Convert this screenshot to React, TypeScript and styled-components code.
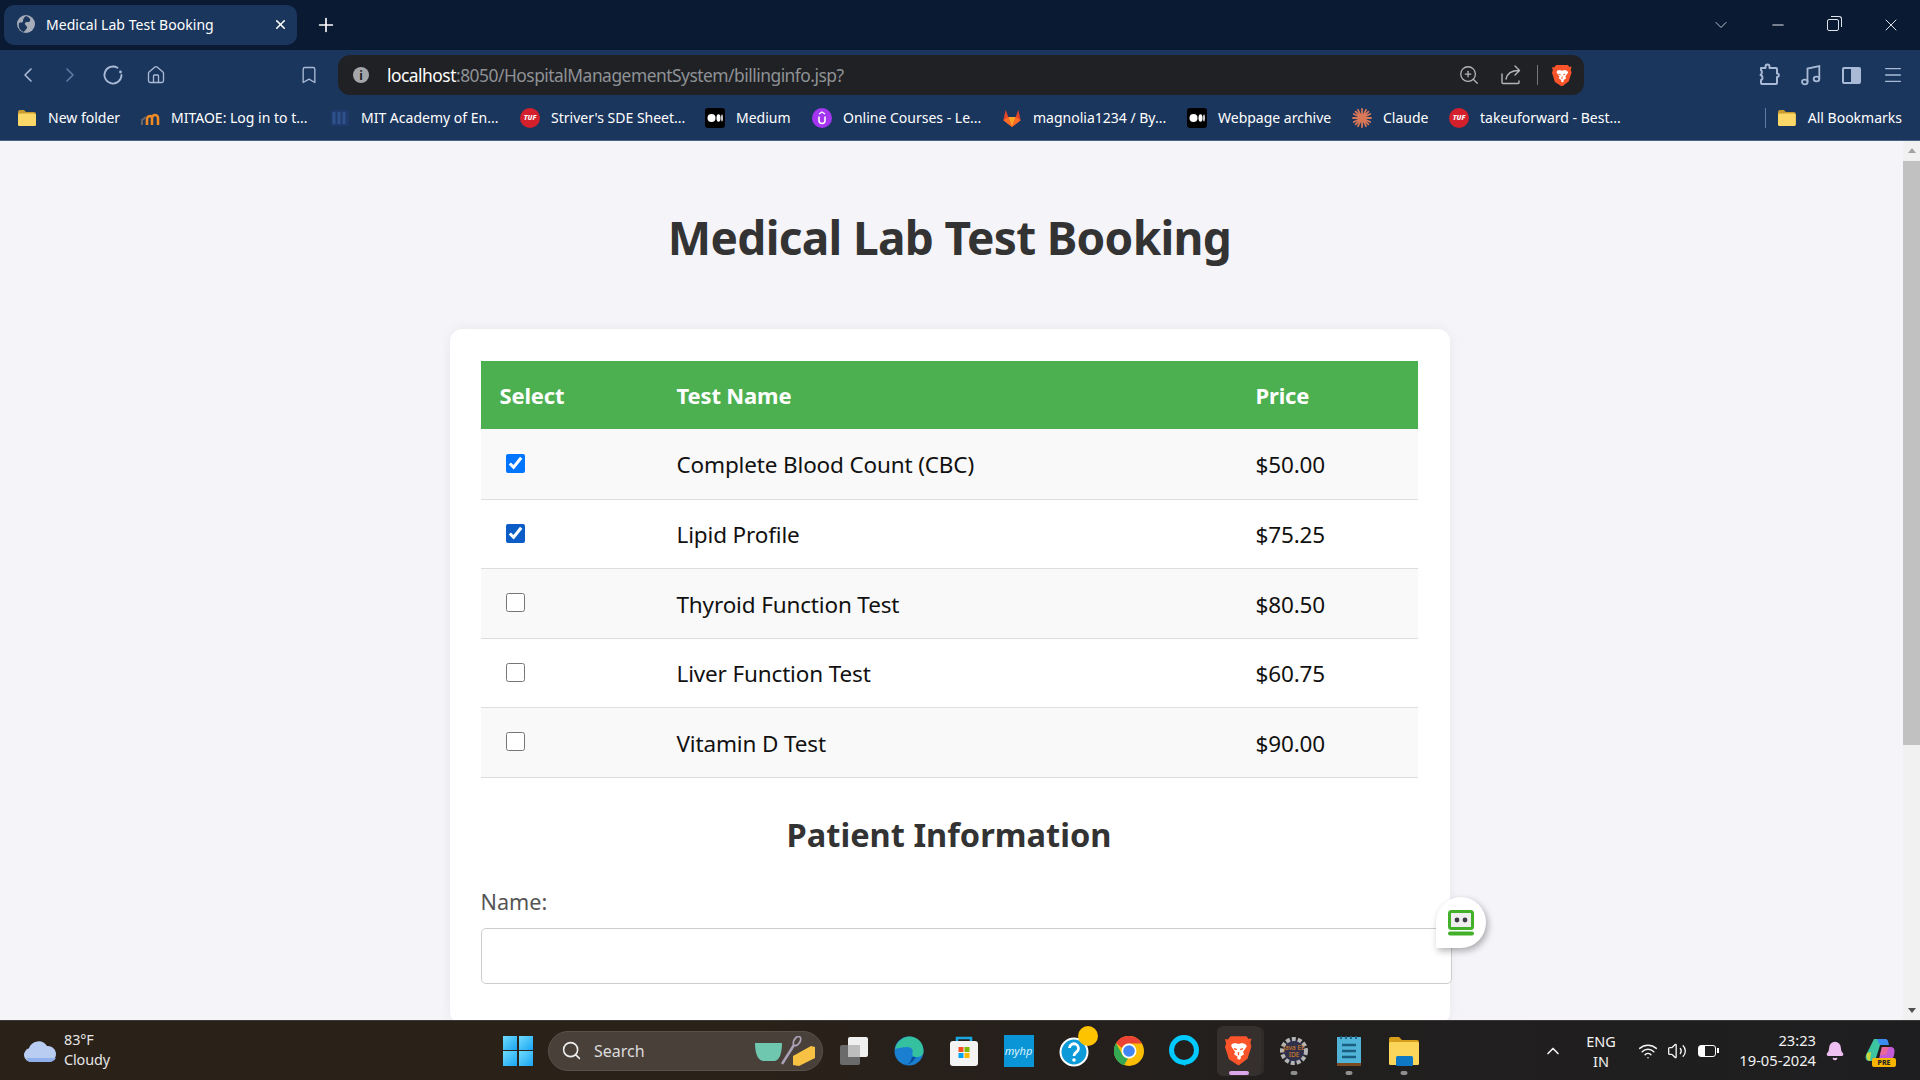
import React from 'react';
import styled, { createGlobalStyle } from 'styled-components';
import {
  Bell, ChevronDown, ChevronLeft, ChevronRight, ChevronUp, Home, Menu, Minus,
  Plus, Search, Volume2, Wifi, X, ZoomIn, Bookmark,
} from 'lucide-react';

const GlobalStyle = createGlobalStyle`
  * { box-sizing: border-box; }
  html, body { margin: 0; height: 100%; overflow: hidden; }
  body { font-family: "Noto Sans", "Open Sans", Arial, sans-serif; background: #f4f4f9; }
`;

const Screen = styled.div`
  width: 1920px;
  height: 1080px;
  display: flex;
  flex-direction: column;
  overflow: hidden;
`;

/* browser chrome */
const TabStrip = styled.div`
  height: 50px;
  flex: none;
  background: #0a1a33;
  display: flex;
  align-items: center;
  padding: 0 0 0 4px;
  color: #fff;
`;
const Tab = styled.div`
  width: 293px;
  height: 40px;
  background: #1b365d;
  border-radius: 10px;
  display: flex;
  align-items: center;
  padding: 0 9px 2px 13px;
  gap: 11px;
  font-size: 14px;
`;
const TabTitle = styled.span`
  flex: 1;
  letter-spacing: 0.05px;
`;
const NewTab = styled.div`
  margin-left: 18px;
  display: flex;
`;
const WindowControls = styled.div`
  margin-left: auto;
  display: flex;
  align-items: center;
  gap: 38px;
  padding-right: 19px;
  color: #dfe3ea;
`;
const RestoreIcon = styled.span`
  width: 12px;
  height: 12px;
  border: 1.4px solid #dfe3ea;
  border-radius: 2px;
  position: relative;
  margin: 0 4px 0 2px;
  &::after {
    content: "";
    position: absolute;
    top: -4px;
    right: -4px;
    width: 10px;
    height: 10px;
    border-top: 1.4px solid #dfe3ea;
    border-right: 1.4px solid #dfe3ea;
    border-top-right-radius: 3px;
  }
`;
const Toolbar = styled.div`
  height: 50px;
  flex: none;
  background: #1b365d;
  display: flex;
  align-items: center;
  padding: 0 0 0 16px;
  color: #a9bad6;
`;
const ToolButton = styled.span<{ $dim?: boolean; $gap?: number }>`
  width: 24px;
  height: 24px;
  display: flex;
  align-items: center;
  justify-content: center;
  margin-right: ${(p) => p.$gap ?? 19}px;
  color: ${(p) => (p.$dim ? '#5f7aa3' : '#a9bad6')};
`;
const AddressBar = styled.div`
  width: 1246px;
  height: 40px;
  background: #202124;
  border-radius: 12px;
  display: flex;
  align-items: center;
  padding: 0 12px 0 15px;
  font-size: 17.4px;
  color: #8f9296;
`;
const InfoDot = styled.span`
  width: 16px;
  height: 16px;
  border-radius: 50%;
  background: #a4a6a9;
  color: #202124;
  font-size: 12px;
  font-weight: 700;
  display: flex;
  align-items: center;
  justify-content: center;
  margin-right: 18px;
`;
const Host = styled.span`
  color: #fff;
`;
const Url = styled.span`
  flex: 1;
  letter-spacing: -0.5px;
`;
const BarIcon = styled.span<{ $gap: number }>`
  display: flex;
  color: #b5b6b8;
  margin-right: ${(p) => p.$gap}px;
`;
const BarDivider = styled.span`
  width: 1px;
  height: 20px;
  background: #77787b;
  margin: 0 14px 0 -4px;
`;
const RightTools = styled.div`
  display: flex;
  align-items: center;
  gap: 18px;
  margin-left: auto;
  padding-right: 16px;
`;
const PanelIcon = styled.span`
  width: 19px;
  height: 17px;
  margin: 0 3px;
  border: 2px solid #a9bad6;
  border-radius: 2px;
  background: linear-gradient(90deg, transparent 50%, #a9bad6 50%);
`;
const PuzzleSlot = styled.span`
  display: flex;
  margin-right: 3px;
`;

const BookmarksBar = styled.div`
  height: 41px;
  flex: none;
  background: #1b365d;
  border-bottom: 1px solid #4a6286;
  display: flex;
  align-items: center;
  padding: 0 0 5px 17px;
  color: #fff;
  font-size: 14px;
`;
const BookmarkItem = styled.div<{ $w: number }>`
  width: ${(p) => p.$w}px;
  flex: none;
  display: flex;
  align-items: center;
  gap: 11px;
  white-space: nowrap;
`;
const BookmarkSeparator = styled.span`
  width: 1px;
  height: 20px;
  background: #5f7aa3;
  margin-left: 106px;
  margin-right: 11px;
`;
const Favicon = styled.span<{ $bg: string; $round?: boolean }>`
  width: 20px;
  height: 20px;
  flex: none;
  display: flex;
  align-items: center;
  justify-content: center;
  background: ${(p) => p.$bg};
  border-radius: ${(p) => (p.$round ? '50%' : '3px')};
`;
const TufText = styled.span`
  color: #fff;
  font-size: 7px;
  font-weight: 800;
  font-style: italic;
`;

/* page */
const Viewport = styled.div`
  flex: 1;
  min-height: 0;
  display: flex;
  position: relative;
  overflow: hidden;
`;
const Page = styled.main`
  width: 1903px;
  flex: none;
  background: #f4f4f9;
  padding-right: 4px;
  display: flex;
  flex-direction: column;
  align-items: center;
`;
const Title = styled.h1`
  flex: none;
  margin: 61px 0 45px;
  height: 82px;
  line-height: 70px;
  font-size: 46px;
  font-weight: 700;
  color: #333;
  letter-spacing: -0.7px;
`;
const Card = styled.section`
  width: 1000px;
  flex: none;
  background: #fff;
  border-radius: 12px;
  box-shadow: 0 0 12px rgba(0, 0, 0, 0.06);
  padding: 32px 32px 40px 31px;
`;
const TestsTable = styled.table`
  width: 937px;
  border-collapse: collapse;
  table-layout: fixed;
  font-size: 22.5px;
  letter-spacing: -0.15px;
  color: #111;
`;
const HeadCell = styled.th<{ $w: number }>`
  width: ${(p) => p.$w}px;
  height: 68px;
  background: #4caf50;
  color: #fff;
  text-align: left;
  padding: 0 19px;
  font-size: 22px;
  font-weight: 700;
`;
const Row = styled.tr<{ $odd: boolean }>`
  height: ${(p) => (p.$odd ? 70 : 69)}px;
  background: ${(p) => (p.$odd ? '#f9f9f9' : '#fff')};
  border-bottom: 1px solid #ddd;
`;
const Cell = styled.td`
  padding: 2px 19px 0;
`;
const CheckCell = styled(Cell)`
  padding: 0 18px 1px 25px;
`;
const Check = styled.input<{ $hover?: boolean }>`
  width: 19px;
  height: 19px;
  margin: 0;
  display: block;
  accent-color: ${(p) => (p.$hover ? '#0b5cc6' : '#0075ff')};
`;
const SectionTitle = styled.h2`
  margin: 33px 0 28px;
  text-align: center;
  font-size: 32.6px;
  line-height: 48px;
  font-weight: 700;
  color: #333;
`;
const FieldLabel = styled.label`
  display: block;
  font-size: 21.6px;
  line-height: 30px;
  color: #555;
  margin-bottom: 11px;
`;
const TextInput = styled.input`
  display: block;
  width: 971px;
  height: 56px;
  border: 1px solid #ccc;
  border-radius: 5px;
  background: #fff;
`;
const Scrollbar = styled.div`
  width: 17px;
  flex: none;
  background: #f1f1f1;
  display: flex;
  flex-direction: column;
  align-items: center;
`;
const ArrowUp = styled.span`
  margin-top: 7px;
  border: 4.5px solid transparent;
  border-top: 0;
  border-bottom: 5px solid #a3a3a3;
`;
const Thumb = styled.div`
  width: 17px;
  height: 584px;
  margin-top: 8px;
  background: #c1c1c1;
`;
const ArrowDown = styled.span`
  margin-top: auto;
  margin-bottom: 7px;
  border: 4.5px solid transparent;
  border-bottom: 0;
  border-top: 5px solid #505050;
`;
const RoboBubble = styled.div`
  position: absolute;
  left: 1436px;
  top: 756px;
  width: 50px;
  height: 51px;
  background: #fff;
  border-radius: 50% 50% 50% 0;
  box-shadow: 2px 3px 7px rgba(0, 0, 0, 0.3);
  display: flex;
  align-items: center;
  justify-content: center;
`;

/* taskbar */
const Taskbar = styled.footer`
  height: 60px;
  flex: none;
  background: linear-gradient(90deg, #2a2119 0%, #2a2119 40%, #221f1e 65%, #1e1e20 100%);
  border-top: 1px solid #3b3836;
  display: flex;
  align-items: center;
  color: #fff;
  position: relative;
`;
const Weather = styled.div`
  width: 503px;
  flex: none;
  display: flex;
  align-items: center;
  gap: 7px;
  padding-left: 23px;
`;
const WeatherText = styled.div`
  font-size: 14.4px;
  line-height: 20px;
  margin-top: -2px;
  letter-spacing: -0.1px;
  color: #e6e6e6;
`;
const WinLogo = styled.span`
  width: 30px;
  height: 30px;
  flex: none;
  display: grid;
  grid-template-columns: 1fr 1fr;
  gap: 1.5px;
  margin-right: 15px;
  & > i {
    display: block;
    background: linear-gradient(135deg, #6fdcfb, #1aa4f5);
  }
`;
const SearchPill = styled.div`
  width: 275px;
  height: 40px;
  flex: none;
  background: #4a403a;
  border: 1px solid #5a514b;
  border-radius: 20px;
  display: flex;
  align-items: center;
  padding: 0 7px 0 12px;
  gap: 12px;
  font-size: 16px;
  color: #dcdcdc;
`;
const PillLabel = styled.span`
  flex: 1;
`;
const AppRow = styled.div`
  display: flex;
  align-items: center;
  margin-left: 3px;
`;
const AppSlot = styled.div<{ $active?: boolean }>`
  width: 55px;
  height: 50px;
  display: flex;
  align-items: center;
  justify-content: center;
  position: relative;
  ${(p) => p.$active && `
    &::before {
      content: "";
      position: absolute;
      inset: 0 5px 0 6px;
      background: #35302d;
      border-radius: 6px;
      box-shadow: 4px 0 0 -1px #2f2b29;
    }
  `}
  & > svg, & > span {
    position: relative;
  }
`;
const RunDot = styled.i<{ $active?: boolean }>`
  position: absolute;
  bottom: 1px;
  left: 50%;
  transform: translateX(-50%);
  width: ${(p) => (p.$active ? 20 : 7)}px;
  height: 4px;
  border-radius: 2px;
  background: ${(p) => (p.$active ? '#dba6ea' : '#8f8f8f')};
`;
const HelpBadge = styled.i`
  position: absolute;
  top: 0;
  right: 3px;
  width: 20px;
  height: 20px;
  border-radius: 50%;
  background: #fdc200;
`;
const Tray = styled.div`
  position: absolute;
  left: 1543px;
  top: 0;
  bottom: 0;
  width: 377px;
  display: flex;
  align-items: center;
  font-size: 15px;
  color: #f2f2f2;
`;
const Lang = styled.div`
  width: 44px;
  margin-left: 16px;
  text-align: center;
  line-height: 20px;
  font-size: 14.5px;
`;
const TrayIcons = styled.div`
  display: flex;
  align-items: center;
  gap: 9px;
  margin-left: 15px;
`;
const BatteryIcon = styled.span`
  width: 18px;
  height: 12px;
  margin-left: 2px;
  border: 1.5px solid #fff;
  border-radius: 3px;
  position: relative;
  background: linear-gradient(90deg, #fff 40%, transparent 40%);
  &::after {
    content: "";
    position: absolute;
    right: -4px;
    top: 2px;
    width: 2px;
    height: 5px;
    background: #fff;
  }
`;
const Clock = styled.div`
  margin-left: 8px;
  margin-top: -2px;
  width: 92px;
  flex: none;
  text-align: right;
  line-height: 20px;
  font-size: 14.7px;
`;
const BellIcon = styled(Bell)`
  margin-left: 9px;
  flex: none;
`;
const CopilotWrap = styled.div`
  margin-left: 20px;
  position: relative;
  display: flex;
`;
const PreTag = styled.span`
  position: absolute;
  right: -1px;
  bottom: -3px;
  width: 24px;
  height: 9px;
  border-radius: 2px;
  background: #f7b500;
  color: #222;
  font-size: 7px;
  font-weight: 800;
  line-height: 9px;
  text-align: center;
`;

const FolderIcon = () => (
  <svg width="20" height="18" viewBox="0 0 20 18">
    <path d="M1 3a2 2 0 0 1 2-2h4l2 2h8a2 2 0 0 1 2 2v10a2 2 0 0 1-2 2H3a2 2 0 0 1-2-2z" fill="#c99a2e" />
    <rect x="1" y="4.500" width="18" height="12.500" rx="1.500" fill="#fbd768" />
  </svg>
);
const MoodleIcon = () => (
  <svg width="20" height="18" viewBox="0 0 20 18">
    <path d="M7 16V10a3 3 0 0 1 5.500-1.500M12 16V9a3 3 0 0 1 6 0v7" fill="none" stroke="#f08a24" strokeWidth="2.600" />
    <path d="M2 16v-5l4-3" fill="none" stroke="#666" strokeWidth="2" />
  </svg>
);
const CollegeIcon = () => (
  <svg width="20" height="20" viewBox="0 0 20 20">
    <rect x="1" y="2" width="18" height="16" fill="#1f3a6b" />
    <path d="M4 4v12M9 4v12M14 4v12" stroke="#2f528c" strokeWidth="3" />
  </svg>
);
const MediumIcon = () => (
  <svg width="20" height="20" viewBox="0 0 20 20">
    <rect width="20" height="20" rx="3" fill="#000" />
    <circle cx="6.500" cy="10" r="4" fill="#fff" />
    <ellipse cx="13.500" cy="10" rx="2" ry="3.800" fill="#fff" />
    <ellipse cx="17" cy="10" rx="0.800" ry="3.400" fill="#fff" />
  </svg>
);
const UdemyIcon = () => (
  <svg width="20" height="20" viewBox="0 0 20 20">
    <circle cx="10" cy="10" r="10" fill="#a435f0" />
    <path d="M7 8.500v4a3 3 0 0 0 6 0v-4" fill="none" stroke="#fff" strokeWidth="1.600" />
    <path d="M7 6l3-2 3 2" fill="none" stroke="#fff" strokeWidth="1.300" />
  </svg>
);
const GitlabIcon = () => (
  <svg width="20" height="22" viewBox="0 0 22 22">
    <path d="M11 21 1.500 13.500 4 2l3 8h8l3-8 2.500 11.500z" fill="#e24329" />
    <path d="M11 21 7 10h8z" fill="#fca326" />
    <path d="M11 21 1.500 13.500 7 10zM11 21l9.500-7.500L15 10z" fill="#fc6d26" />
  </svg>
);
const ClaudeIcon = () => (
  <svg width="20" height="20" viewBox="0 0 20 20" stroke="#d97757" strokeWidth="1.800" strokeLinecap="round">
    <path d="M10 1v18M1 10h18M3.600 3.600l12.800 12.800M16.400 3.600 3.600 16.400M6 1.800l8 16.400M14 1.800 6 18.200M1.800 6l16.400 8M18.200 6 1.800 14" />
  </svg>
);
const BraveIcon = ({ size }: { size: number }) => (
  <svg width={size} height={size * 1.13} viewBox="0 0 24 27">
    <path d="M5 1h14l2 2.500 2.500-.5-1 4 1 3-3.500 11L12 27l-8.500-5.500L0 10.500l1-3-1-4 2.500.5z" fill="#fb542b" />
    <path d="M6 8l3-1 3 1 3-1 3 1 1.500 2-3.500 5 1 2-3 2v2l-1.500 1-1.500-1v-2l-3-2 1-2-3.500-5z" fill="#fff" />
    <path d="M8 12l2.500 1M16 12l-2.500 1M12 15v3" stroke="#fb542b" strokeWidth="1.200" />
  </svg>
);
const ReloadIcon = () => (
  <svg width="22" height="22" viewBox="0 0 22 22" fill="none" stroke="currentColor" strokeWidth="1.800" strokeLinecap="round">
    <path d="M15.500 3.800A8.500 8.500 0 1 0 19.500 11" />
    <circle cx="18.500" cy="8" r="1.400" fill="currentColor" stroke="none" />
  </svg>
);
const ShareIcon = () => (
  <svg width="22" height="22" viewBox="0 0 22 22" fill="none" stroke="currentColor" strokeWidth="1.400" strokeLinecap="round" strokeLinejoin="round">
    <path d="M2 10v8.500a1 1 0 0 0 1 1h15a1 1 0 0 0 1-1V17" />
    <path d="M6 15c1-5 5-8.500 13-8.500M15 2l4.500 4.500L15 11" />
  </svg>
);
const PuzzleIcon = () => (
  <svg width="22" height="24" viewBox="0 0 22 24" fill="none" stroke="#a9bad6" strokeWidth="2" strokeLinejoin="round">
    <path d="M3 5h4.500V3.500a2 2 0 0 1 4 0V5H18a1 1 0 0 1 1 1v4.500h.5a1.800 1.800 0 0 1 0 3.500H19v6a1 1 0 0 1-1 1H4a1 1 0 0 1-1-1v-3c2 0 2-4.500-.5-5 1.500-1 2-3.500.5-5z" />
  </svg>
);
const NotesIcon = () => (
  <svg width="20" height="22" viewBox="0 0 20 22" fill="none" stroke="#a9bad6" strokeWidth="1.800">
    <ellipse cx="3.800" cy="18" rx="2.800" ry="2.300" />
    <ellipse cx="15.500" cy="15" rx="2.800" ry="2.300" />
    <path d="M6.500 18V4.500L18.300 2v13" />
  </svg>
);
const RoboIcon = () => (
  <svg width="26" height="26" viewBox="0 0 26 26">
    <rect x="1.500" y="1.500" width="23" height="17" rx="2" fill="#eee" stroke="#43b02a" strokeWidth="3" />
    <circle cx="9" cy="10" r="2.400" fill="#3c3c46" />
    <circle cx="17" cy="10" r="2.400" fill="#3c3c46" />
    <rect x="0" y="21.500" width="26" height="4" rx="2" fill="#43b02a" />
  </svg>
);
const CloudIcon = () => (
  <svg width="34" height="24" viewBox="0 0 34 24">
    <path d="M8 23a7 7 0 0 1-2-13.700A10 10 0 0 1 24 7a8 8 0 0 1 2 16z" fill="#b9cdf3" />
    <path d="M8 23a7 7 0 0 1-5-4h30a8 8 0 0 1-7 4z" fill="#8fb0ea" />
  </svg>
);
const BakingIcon = () => (
  <svg width="60" height="30" viewBox="0 0 60 30">
    <path d="M0 7h27c0 11-3 18-8 18h-10C3 25 0 18 0 7z" fill="#6fc7b0" />
    <path d="M27 28 39 9" stroke="#a9a1b8" strokeWidth="2.500" />
    <ellipse cx="42" cy="5" rx="3" ry="5" transform="rotate(32 42 5)" fill="none" stroke="#a9a1b8" strokeWidth="1.800" />
    <path d="M38 20 56 10l4 1v11L44 30l-6-1z" fill="#f7c244" />
  </svg>
);
const TaskViewIcon = () => (
  <svg width="30" height="30" viewBox="0 0 30 30">
    <rect x="1" y="9" width="20" height="20" rx="2" fill="#6a6a6a" />
    <rect x="9" y="1" width="20" height="20" rx="2" fill="#f0f0f0" />
    <rect x="9" y="9" width="12" height="12" fill="#bdbdbd" />
  </svg>
);
const EdgeIcon = () => (
  <svg width="30" height="30" viewBox="0 0 30 30">
    <circle cx="15" cy="15" r="14.500" fill="#1b7fd1" />
    <path d="M1 13C3 4 11 .5 15 .5 24 .5 29.500 7 29.500 15c0 4-3 6-7 6-3 0-5-2-4-4 1-3-1-6-5-6-5 0-9 1-12.500 2z" fill="#35c1a0" />
    <path d="M22 21c-4 7-10 9-14 7 4 1 8 1 10-7z" fill="#0c4d97" />
  </svg>
);
const StoreIcon = () => (
  <svg width="30" height="32" viewBox="0 0 30 32">
    <path d="M8 7V3h14v4" fill="none" stroke="#1aa7e0" strokeWidth="2.500" />
    <rect x="1" y="6" width="28" height="25" rx="3" fill="#f4f4f4" />
    <rect x="9.500" y="12" width="5" height="5" fill="#f25022" />
    <rect x="15.500" y="12" width="5" height="5" fill="#7fba00" />
    <rect x="9.500" y="18" width="5" height="5" fill="#00a4ef" />
    <rect x="15.500" y="18" width="5" height="5" fill="#ffb900" />
  </svg>
);
const MyHpTile = styled.span`
  width: 30px;
  height: 32px;
  background: #0a96d6;
  color: #dff3fc;
  font-size: 11px;
  font-style: italic;
  display: flex;
  align-items: center;
  justify-content: center;
`;
const HelpIcon = () => (
  <svg width="30" height="32" viewBox="0 0 30 32">
    <circle cx="15" cy="17" r="13.500" fill="#0d9ad8" stroke="#fff" strokeWidth="2" />
    <path d="M10.500 13a4.500 4.500 0 1 1 7 4c-1.500 1-2.500 2-2.500 4" fill="none" stroke="#fff" strokeWidth="2.800" />
    <circle cx="15" cy="25" r="1.800" fill="#fff" />
  </svg>
);
const ChromeIcon = () => (
  <svg width="30" height="30" viewBox="0 0 30 30">
    <circle cx="15" cy="15" r="15" fill="#fbbc04" />
    <path d="M15 0a15 15 0 0 1 13 7.500H15a7.500 7.500 0 0 0-7 4.500L2 7A15 15 0 0 1 15 0z" fill="#ea4335" />
    <path d="M2 7l6 11a7.500 7.500 0 0 0 6 4.500L10 29.200A15 15 0 0 1 2 7z" fill="#34a853" />
    <circle cx="15" cy="15" r="7.500" fill="#fff" />
    <circle cx="15" cy="15" r="5.800" fill="#4285f4" />
  </svg>
);
const AlexaIcon = () => (
  <svg width="30" height="32" viewBox="0 0 30 32">
    <circle cx="15" cy="15" r="12.500" fill="none" stroke="#00caff" strokeWidth="5" />
    <path d="M9 25l7 6 1-5z" fill="#00caff" />
  </svg>
);
const GearTile = () => (
  <svg width="30" height="30" viewBox="0 0 30 30">
    <circle cx="15" cy="15" r="12" fill="#30304a" stroke="#b5b5b5" strokeWidth="4" strokeDasharray="4 2" />
    <text x="15" y="13.500" textAnchor="middle" fontSize="6.500" fill="#e08a1e" fontFamily="Noto Sans, sans-serif">Java EE</text>
    <text x="15" y="21" textAnchor="middle" fontSize="6.500" fill="#e08a1e" fontFamily="Noto Sans, sans-serif">IDE</text>
  </svg>
);
const NotepadIcon = () => (
  <svg width="28" height="32" viewBox="0 0 28 32">
    <rect x="2" y="2" width="24" height="29" fill="#4fb4d8" />
    <rect x="2" y="28" width="24" height="3" fill="#7b4a20" />
    <path d="M7 10h14M7 16h14M7 22h14" stroke="#1a5e80" strokeWidth="2.400" />
    <path d="M6 1v3M11 1v3M16 1v3M21 1v3" stroke="#1a5e80" strokeWidth="1.800" />
  </svg>
);
const ExplorerIcon = () => (
  <svg width="32" height="30" viewBox="0 0 32 30">
    <path d="M1 3a2 2 0 0 1 2-2h8l3 3h15a2 2 0 0 1 2 2v6H1z" fill="#d79e1b" />
    <rect x="1" y="6" width="30" height="23" rx="1.500" fill="#fbd65b" />
    <rect x="8" y="20" width="17" height="10" rx="1.500" fill="#0f78c4" />
  </svg>
);
const CopilotIcon = () => (
  <svg width="30" height="26" viewBox="0 0 30 26">
    <path d="M9 1h8l-7 22H4C1 23 0 20 1 17z" fill="#3cc5a0" />
    <path d="M2 15 6 14l-1 9C2 23 1 19 2 15z" fill="#c9d93c" />
    <path d="M12 1h8c3 0 3 2 4 6H15z" fill="#3a8cf0" />
    <path d="M17 9h9c4 0 4 4 3 8-1 5-4 8-7 8h-9z" fill="#c45ad6" />
    <path d="M17 9h7l-3 8h-6z" fill="#e7679b" />
  </svg>
);

const bookmarks: { label: string; w: number; icon: React.ReactNode }[] = [
  { label: 'New folder', w: 123, icon: <FolderIcon /> },
  { label: 'MITAOE: Log in to t...', w: 190, icon: <MoodleIcon /> },
  { label: 'MIT Academy of En...', w: 190, icon: <CollegeIcon /> },
  { label: "Striver's SDE Sheet...", w: 185, icon: <Favicon $bg="#d4202c" $round><TufText>TUF</TufText></Favicon> },
  { label: 'Medium', w: 107, icon: <MediumIcon /> },
  { label: 'Online Courses - Le...', w: 190, icon: <UdemyIcon /> },
  { label: 'magnolia1234 / By...', w: 185, icon: <GitlabIcon /> },
  { label: 'Webpage archive', w: 165, icon: <MediumIcon /> },
  { label: 'Claude', w: 97, icon: <ClaudeIcon /> },
  { label: 'takeuforward - Best...', w: 210, icon: <Favicon $bg="#d4202c" $round><TufText>TUF</TufText></Favicon> },
];

const tests = [
  { name: 'Complete Blood Count (CBC)', price: '$50.00', checked: true },
  { name: 'Lipid Profile', price: '$75.25', checked: true, hover: true },
  { name: 'Thyroid Function Test', price: '$80.50', checked: false },
  { name: 'Liver Function Test', price: '$60.75', checked: false },
  { name: 'Vitamin D Test', price: '$90.00', checked: false },
];

const App = () => (
  <Screen>
    <GlobalStyle />
    <TabStrip>
      <Tab>
        <svg width="18" height="18" viewBox="0 0 18 18">
          <circle cx="9" cy="9" r="9" fill="#a6adb8" />
          <path d="M9 1c3 1 5 3 4 5s-4 0-5 2 3 3 2 5-3 3-3 4C3 16 1 12 2 8c2-1 4 0 4-2s1-4 3-5z" fill="#1b365d" />
        </svg>
        <TabTitle>Medical Lab Test Booking</TabTitle>
        <X size={15} strokeWidth={2.6} />
      </Tab>
      <NewTab><Plus size={22} strokeWidth={1.8} /></NewTab>
      <WindowControls>
        <ChevronDown size={20} strokeWidth={1} />
        <Minus size={18} strokeWidth={1.4} />
        <RestoreIcon />
        <X size={20} strokeWidth={1.2} />
      </WindowControls>
    </TabStrip>

    <Toolbar>
      <ToolButton $gap={18}><ChevronLeft size={24} strokeWidth={1.6} /></ToolButton>
      <ToolButton $dim $gap={19}><ChevronRight size={24} strokeWidth={1.6} /></ToolButton>
      <ToolButton $gap={19}><ReloadIcon /></ToolButton>
      <ToolButton $gap={129}><Home size={20} strokeWidth={1.6} /></ToolButton>
      <ToolButton $gap={17}><Bookmark size={20} strokeWidth={1.6} /></ToolButton>
      <AddressBar>
        <InfoDot>i</InfoDot>
        <Url><Host>localhost</Host>:8050/HospitalManagementSystem/billinginfo.jsp?</Url>
        <BarIcon $gap={20}><ZoomIn size={22} strokeWidth={1.4} /></BarIcon>
        <BarIcon $gap={19}><ShareIcon /></BarIcon>
        <BarDivider />
        <BraveIcon size={20} />
      </AddressBar>
      <RightTools>
        <PuzzleSlot><PuzzleIcon /></PuzzleSlot>
        <NotesIcon />
        <PanelIcon />
        <Menu size={22} strokeWidth={1.5} />
      </RightTools>
    </Toolbar>

    <BookmarksBar>
      {bookmarks.map((b) => (
        <BookmarkItem key={b.label} $w={b.w}>
          {b.icon}
          <span>{b.label}</span>
        </BookmarkItem>
      ))}
      <BookmarkSeparator />
      <BookmarkItem $w={125}>
        <FolderIcon />
        <span>All Bookmarks</span>
      </BookmarkItem>
    </BookmarksBar>

    <Viewport>
      <Page>
        <Title>Medical Lab Test Booking</Title>
        <Card>
          <TestsTable>
            <thead>
              <tr>
                <HeadCell $w={177}>Select</HeadCell>
                <HeadCell $w={579}>Test Name</HeadCell>
                <HeadCell $w={181}>Price</HeadCell>
              </tr>
            </thead>
            <tbody>
              {tests.map((t, i) => (
                <Row key={t.name} $odd={i % 2 === 0}>
                  <CheckCell>
                    <Check type="checkbox" defaultChecked={t.checked} $hover={t.hover} />
                  </CheckCell>
                  <Cell>{t.name}</Cell>
                  <Cell>{t.price}</Cell>
                </Row>
              ))}
            </tbody>
          </TestsTable>
          <SectionTitle>Patient Information</SectionTitle>
          <FieldLabel htmlFor="name">Name:</FieldLabel>
          <TextInput id="name" type="text" />
        </Card>
      </Page>
      <Scrollbar>
        <ArrowUp />
        <Thumb />
        <ArrowDown />
      </Scrollbar>
      <RoboBubble><RoboIcon /></RoboBubble>
    </Viewport>

    <Taskbar>
      <Weather>
        <CloudIcon />
        <WeatherText>83°F<br />Cloudy</WeatherText>
      </Weather>
      <WinLogo><i /><i /><i /><i /></WinLogo>
      <SearchPill>
        <Search size={21} strokeWidth={1.8} color="#eee" />
        <PillLabel>Search</PillLabel>
        <BakingIcon />
      </SearchPill>
      <AppRow>
        <AppSlot><TaskViewIcon /></AppSlot>
        <AppSlot><EdgeIcon /></AppSlot>
        <AppSlot><StoreIcon /></AppSlot>
        <AppSlot><MyHpTile>myhp</MyHpTile></AppSlot>
        <AppSlot><HelpIcon /><HelpBadge /></AppSlot>
        <AppSlot><ChromeIcon /></AppSlot>
        <AppSlot><AlexaIcon /></AppSlot>
        <AppSlot $active><BraveIcon size={27} /><RunDot $active /></AppSlot>
        <AppSlot><GearTile /><RunDot /></AppSlot>
        <AppSlot><NotepadIcon /><RunDot /></AppSlot>
        <AppSlot><ExplorerIcon /><RunDot /></AppSlot>
      </AppRow>
      <Tray>
        <ChevronUp size={20} strokeWidth={2} />
        <Lang>ENG<br />IN</Lang>
        <TrayIcons>
          <Wifi size={20} strokeWidth={1.8} />
          <Volume2 size={20} strokeWidth={1.6} />
          <BatteryIcon />
        </TrayIcons>
        <Clock>23:23<br />19-05-2024</Clock>
        <BellIcon size={20} fill="#eec0f2" color="#eec0f2" />
        <CopilotWrap>
          <CopilotIcon />
          <PreTag>PRE</PreTag>
        </CopilotWrap>
      </Tray>
    </Taskbar>
  </Screen>
);

export default App;
